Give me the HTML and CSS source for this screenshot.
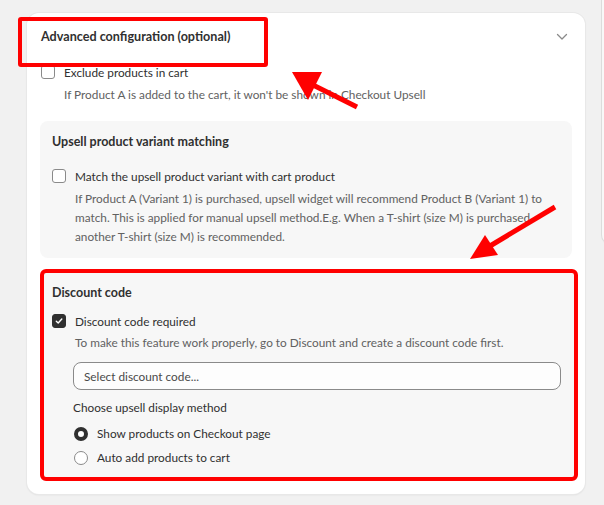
FILE: index.html
```html
<!DOCTYPE html>
<html lang="en">
<head>
<meta charset="utf-8">
<title>Advanced configuration</title>
<link rel="stylesheet" href="styles.css">
</head>
<body>
<div class="page">
  <main class="main">
    <section class="card">
      <header class="card-header">
        <h2 class="card-title">Advanced configuration (optional)</h2>
        <svg class="chevron" width="12" height="8" viewBox="0 0 12 8" aria-hidden="true"><path d="M1.5 1.5 L6 6 L10.5 1.5" fill="none" stroke="#8a8a8a" stroke-width="1.3" stroke-linecap="round" stroke-linejoin="round"/></svg>
      </header>
      <div class="card-body">
        <label class="option option-top">
          <span class="checkbox"></span>
          <span class="option-text">
            <span class="label">Exclude products in cart</span>
            <span class="help">If Product A is added to the cart, it won't be shown in Checkout Upsell</span>
          </span>
        </label>

        <div class="panel">
          <h3 class="panel-title">Upsell product variant matching</h3>
          <label class="option option-spaced">
            <span class="checkbox"></span>
            <span class="option-text">
              <span class="label">Match the upsell product variant with cart product</span>
              <span class="help">If Product A (Variant 1) is purchased, upsell widget will recommend Product B (Variant 1) to match. This is applied for manual upsell method.E.g. When a T-shirt (size M) is purchased another T-shirt (size M) is recommended.</span>
            </span>
          </label>
        </div>

        <div class="panel panel-marked">
          <h3 class="panel-title">Discount code</h3>
          <label class="option option-tight">
            <span class="checkbox checked">
              <svg width="10" height="10" viewBox="0 0 10 10" aria-hidden="true"><path d="M2.3 5.2 L4.2 7 L7.8 3" fill="none" stroke="#fff" stroke-width="1.4" stroke-linecap="round" stroke-linejoin="round"/></svg>
            </span>
            <span class="option-text">
              <span class="label">Discount code required</span>
              <span class="help">To make this feature work properly, go to Discount and create a discount code first.</span>
            </span>
          </label>
          <div class="sub">
            <div class="select">Select discount code...</div>
            <div class="group-label">Choose upsell display method</div>
            <div class="radios">
              <label class="radio-row"><span class="radio selected"></span><span class="label">Show products on Checkout page</span></label>
              <label class="radio-row"><span class="radio"></span><span class="label">Auto add products to cart</span></label>
            </div>
          </div>
        </div>
      </div>
    </section>
  </main>
  <aside class="side"></aside>

  <div class="annot-box"></div>
  <svg class="annot-arrows" width="604" height="505" viewBox="0 0 604 505" aria-hidden="true">
    <line x1="357" y1="107" x2="313" y2="85" stroke="#ff0000" stroke-width="5"/>
    <polygon points="292,72 322,72 308,100" fill="#ff0000"/>
    <line x1="555" y1="207" x2="490" y2="246" stroke="#ff0000" stroke-width="5"/>
    <polygon points="470,259 485,235 498,255" fill="#ff0000"/>
  </svg>
</div>
</body>
</html>
```

FILE: styles.css
```css
* { box-sizing: border-box; }

html, body {
  margin: 0;
  padding: 0;
  background: #f1f1f1;
}

body {
  font-family: Lato, "Noto Sans", sans-serif;
  font-size: 11.8px;
  color: #303030;
}

.page {
  position: relative;
  width: 604px;
  height: 505px;
  overflow: hidden;
  display: flex;
  align-items: flex-start;
  padding-top: 13px;
}

.main {
  padding-left: 27px;
}

.card {
  width: 558px;
  background: #ffffff;
  border-radius: 12px;
  box-shadow: 0 0 0 1px #e8e8e8, 0 1px 2px rgba(0, 0, 0, 0.1);
  padding: 0 13px 13px;
}

.card-header {
  display: flex;
  align-items: center;
  justify-content: space-between;
  padding: 14px 4px 0 1px;
}

.card-title {
  margin: 0;
  font-size: 12.6px;
  font-weight: 700;
  line-height: 20px;
}

.chevron {
  display: block;
}

.card-body {
  padding-top: 17px;
}

.option {
  display: flex;
  gap: 9px;
  align-items: flex-start;
}

.option-top {
  margin-left: 1px;
}

.checkbox {
  flex: none;
  width: 14px;
  height: 14px;
  margin-top: 1px;
  border: 1px solid #8a8a8a;
  border-radius: 3px;
  background: #fff;
  display: flex;
  align-items: center;
  justify-content: center;
}

.checkbox.checked {
  background: #303030;
  border-color: #303030;
}

.option-text {
  display: flex;
  flex-direction: column;
}

.label {
  line-height: 18px;
  color: #303030;
}

.help {
  margin-top: 3px;
  line-height: 19px;
  color: #616161;
}

.panel {
  margin-top: 17px;
  background: #f7f7f7;
  border-radius: 8px;
  padding: 12px 12px 12px;
}

.panel-title {
  margin: 0;
  font-size: 12.5px;
  font-weight: 700;
  line-height: 18px;
}

.option-spaced {
  margin-top: 17px;
}

.panel-marked {
  margin-top: 11px;
  margin-right: -6px;
  border: 4px solid #ff0000;
  border-radius: 6px;
  padding: 11px 13px 10px 8px;
}

.option-tight {
  margin-top: 11px;
}

.option-tight .help {
  margin-top: 2px;
}

.sub {
  padding-left: 21px;
}

.select {
  margin-top: 10px;
  height: 28px;
  border: 1px solid #8a8a8a;
  border-radius: 8px;
  background: #fdfdfd;
  padding: 0 10px;
  display: flex;
  align-items: center;
  color: #4a4a4a;
}

.group-label {
  margin-top: 9px;
  line-height: 18px;
}

.radios {
  margin-top: 8px;
  display: flex;
  flex-direction: column;
  gap: 6px;
}

.radio-row {
  display: flex;
  align-items: center;
  gap: 9px;
  padding-left: 1px;
}

.radio {
  flex: none;
  width: 14px;
  height: 14px;
  border-radius: 50%;
  border: 1px solid #8a8a8a;
  background: #fff;
}

.radio.selected {
  border: 4px solid #303030;
}

.side {
  margin-left: 16px;
  margin-top: -13px;
  width: 40px;
  height: 245px;
  flex: none;
  background: #f8f8f8;
  border-left: 1px solid #dcdcdc;
  border-bottom: 1px solid #dcdcdc;
  border-bottom-left-radius: 10px;
}

.annot-box {
  position: absolute;
  left: 18px;
  top: 17px;
  width: 250px;
  height: 50px;
  border: 4px solid #ff0000;
  border-radius: 3px;
}

.annot-arrows {
  position: absolute;
  left: 0;
  top: 0;
  pointer-events: none;
}
```
